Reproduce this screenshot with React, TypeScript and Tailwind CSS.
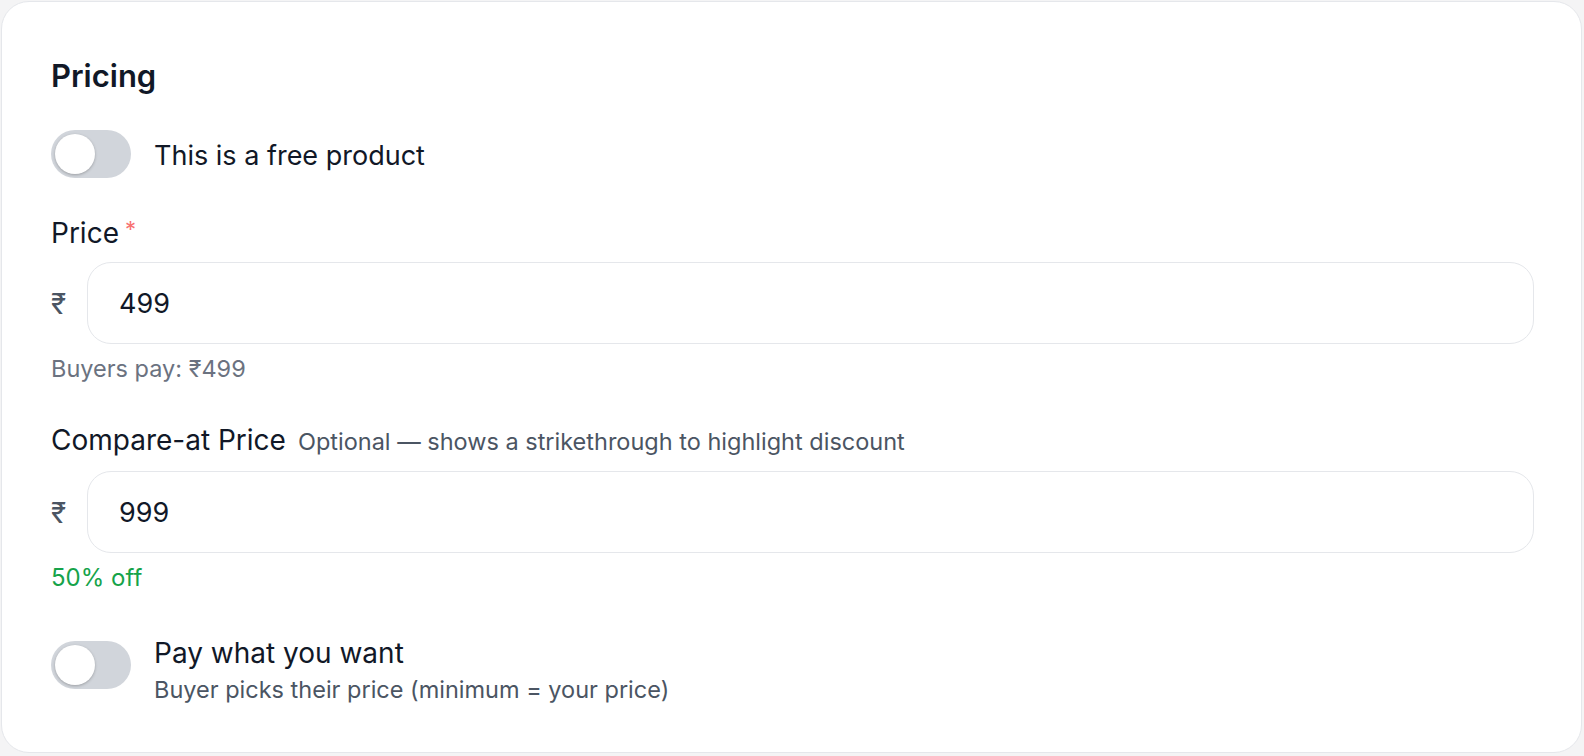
import { useState } from "react";

function Toggle({ on, onChange }: { on: boolean; onChange: () => void }) {
  return (
    <button
      type="button"
      onClick={onChange}
      className={`relative flex h-[48px] w-[80px] shrink-0 items-center rounded-full p-[4px] transition-colors ${
        on ? "bg-[#16a34a]" : "bg-[#d1d5db]"
      }`}
    >
      <span
        className={`h-[40px] w-[40px] rounded-full bg-white shadow-[0_1px_3px_rgba(0,0,0,0.25)] transition-transform ${
          on ? "translate-x-[32px]" : "translate-x-0"
        }`}
      />
    </button>
  );
}

function PriceInput({ value, onChange }: { value: string; onChange: (v: string) => void }) {
  return (
    <div className="flex items-center gap-[17px]">
      <span className="w-[19px] pt-[2px] text-[28px] leading-none text-[#4b5563]">₹</span>
      <input
        value={value}
        onChange={e => onChange(e.target.value)}
        className="h-[82px] flex-1 rounded-[24px] border border-[#e5e7eb] bg-white px-[31px] text-[27px] text-[#111827] outline-none"
      />
    </div>
  );
}

export default function App() {
  const [free, setFree] = useState(false);
  const [pwyw, setPwyw] = useState(false);
  const [price, setPrice] = useState("499");
  const [compare, setCompare] = useState("999");

  const p = parseFloat(price) || 0;
  const c = parseFloat(compare) || 0;
  const off = c > p && c > 0 ? Math.round(((c - p) / c) * 100) : 0;

  return (
    <div
      className="h-[756px] w-[1584px] bg-[#f4f4f5] pl-[1px] pt-[1px]"
      style={{ fontFamily: "Inter, 'Noto Sans', 'DejaVu Sans', sans-serif" }}
    >
      <div className="flex h-[752px] w-[1581px] flex-col rounded-[28px] border border-[#e5e7eb] bg-white pl-[49px] pr-[47px] pt-[56px]">
        <h2 className="text-[31px] font-semibold leading-[36px] text-[#111827]">Pricing</h2>

        {/* Free toggle */}
        <div className="mt-[36px] flex items-center gap-[23px]">
          <Toggle on={free} onChange={() => setFree(!free)} />
          <span className="pt-[4px] text-[27px] leading-[36px] text-[#111827]">This is a free product</span>
        </div>

        {/* Price */}
        <div className="mt-[37px] flex items-start text-[28px] leading-[36px] text-[#111827]">
          Price
          <span className="ml-[6px] text-[22px] leading-[28px] text-[#f87171]">*</span>
        </div>
        <div className="mt-[11px]">
          <PriceInput value={price} onChange={setPrice} />
        </div>
        <div className="mt-[10px] text-[23.5px] leading-[30px] text-[#6b7280]">Buyers pay: ₹{price}</div>

        {/* Compare-at */}
        <div className="mt-[38px] flex items-baseline gap-[12px]">
          <span className="text-[28px] leading-[36px] text-[#111827]">Compare-at Price</span>
          <span className="text-[23.5px] leading-[30px] text-[#4b5563]">
            Optional — shows a strikethrough to highlight discount
          </span>
        </div>
        <div className="mt-[13px]">
          <PriceInput value={compare} onChange={setCompare} />
        </div>
        <div className="mt-[10px] text-[24px] leading-[30px] text-[#16a34a]">{off}% off</div>

        {/* Pay what you want */}
        <div className="mt-[42px] flex items-start gap-[23px]">
          <div className="mt-[6px]">
            <Toggle on={pwyw} onChange={() => setPwyw(!pwyw)} />
          </div>
          <div className="flex flex-col gap-[4px]">
            <span className="text-[28px] leading-[36px] text-[#111827]">Pay what you want</span>
            <span className="text-[23.5px] leading-[30px] text-[#4b5563]">
              Buyer picks their price (minimum = your price)
            </span>
          </div>
        </div>
      </div>
    </div>
  );
}
